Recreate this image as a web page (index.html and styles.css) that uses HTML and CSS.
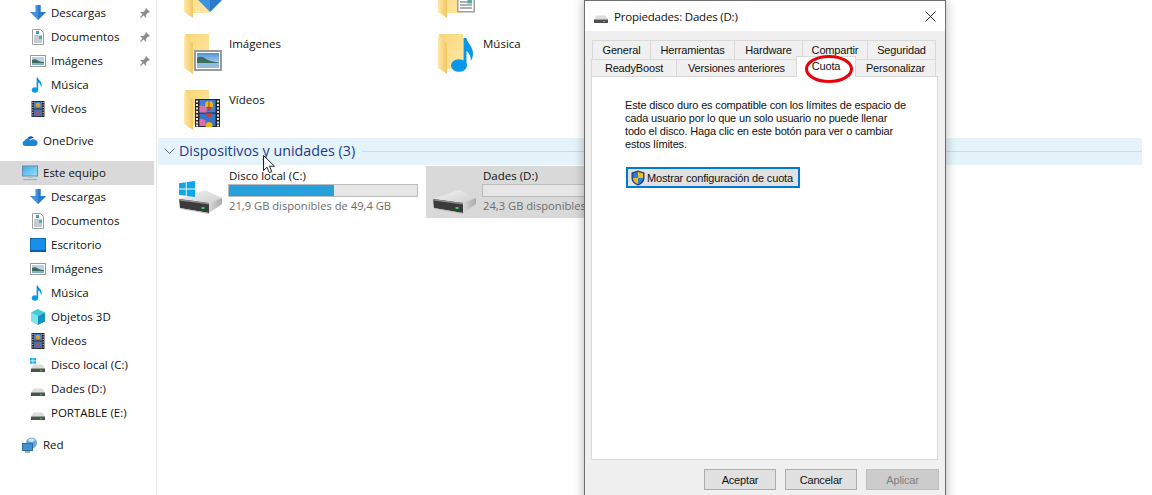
FILE: index.html
```html
<!DOCTYPE html>
<html lang="es">
<head>
<meta charset="utf-8">
<title>Propiedades: Dades (D:)</title>
<link rel="stylesheet" href="styles.css">
</head>
<body>
<svg class="defs" width="0" height="0" aria-hidden="true">
  <defs>
    <linearGradient id="g-back" x1="0" y1="0" x2="1" y2="1"><stop offset="0" stop-color="#f8d677"/><stop offset="1" stop-color="#ffe9a6"/></linearGradient>
    <linearGradient id="g-flap" x1="0" y1="0" x2="1" y2="0"><stop offset="0" stop-color="#ffe9a8"/><stop offset="1" stop-color="#f2c661"/></linearGradient>
    <linearGradient id="g-screen" x1="0" y1="0" x2="1" y2="1"><stop offset="0" stop-color="#3fa9e8"/><stop offset="1" stop-color="#9be0fa"/></linearGradient>
    <linearGradient id="g-sky" x1="0" y1="0" x2="0" y2="1"><stop offset="0" stop-color="#4f93d8"/><stop offset="1" stop-color="#d8ecf2"/></linearGradient>
    <linearGradient id="g-top" x1="0" y1="0" x2="1" y2="1"><stop offset="0" stop-color="#f4f4f4"/><stop offset="1" stop-color="#cfcfcf"/></linearGradient>
    <linearGradient id="g-side" x1="0" y1="0" x2="1" y2="0"><stop offset="0" stop-color="#d8d8d8"/><stop offset="1" stop-color="#a8a8a8"/></linearGradient>

    <symbol id="i-down" viewBox="0 0 16 16"><path d="M5.500 0h5v7H16L8 15 0 7h5.500z" fill="#3f92e0"/><path d="M8 0h2.500v7H16L8 15z" fill="#2b79cb"/></symbol>
    <symbol id="i-doc" viewBox="0 0 16 16"><path d="M2.500.5h8l3 3v12h-11z" fill="#fff" stroke="#a0a0a0"/><path d="M4 7h8M4 9h8M4 11h8M4 13h8" stroke="#8a9aa0"/><path d="M6 2h3v3H6z" fill="#3d9ad6"/><path d="M9 7h3v3H9z" fill="#4fae9c"/></symbol>
    <symbol id="i-pic" viewBox="0 0 16 14"><rect x=".5" y="1.500" width="15" height="11" fill="#fff" stroke="#9a9a9a"/><rect x="2" y="3" width="12" height="8" fill="#b9d4e8"/><path d="M2 6c2-1 4-1 6 .5 2 1.200 4 1.500 6 1.500v1H2z" fill="#3f6b5c"/><rect x="2" y="9" width="12" height="2" fill="#7fb0d0"/></symbol>
    <symbol id="i-pic-lg" viewBox="0 0 28 21"><rect x="1" y="1" width="26" height="19" fill="#fff" stroke="#9a9a9a" stroke-width="2"/><rect x="3" y="3" width="22" height="15" fill="url(#g-sky)"/><path d="M3 8c3-2 6-1.500 9 1 3 2 8 3 13 3.500V14H3z" fill="#3d6d5c"/><rect x="3" y="13" width="22" height="5" fill="#8fbede"/></symbol>
    <symbol id="i-note" viewBox="0 0 16 16"><ellipse cx="5" cy="13" rx="3.200" ry="2.700" fill="#0a97ea"/><path d="M6.600 13V.5h1.300c.3 2.500 3.800 3.500 3.800 7.200 0 1-.3 2-.8 2.800.2-3-1.500-4.600-2.700-5.200V13z" fill="#0a97ea"/></symbol>
    <symbol id="i-note-lg" viewBox="0 0 22 34"><ellipse cx="8" cy="27.500" rx="8" ry="6.300" fill="#0a97ea"/><path d="M12.500 28V0h3c.8 5.500 6.500 8 6.500 15.500 0 3-1 5.500-2.200 7.500.4-5.500-2.800-9.200-4.300-10V28z" fill="#0a97ea"/></symbol>
    <symbol id="i-film" viewBox="0 0 16 16"><rect x="1.500" width="13" height="16" fill="#2e2e2e"/><rect x="4" y="1" width="8" height="6.500" fill="#4c7fce"/><rect x="4" y="8.500" width="8" height="6.500" fill="#3f74c6"/><circle cx="8" cy="4" r="2.200" fill="#e0a020"/><circle cx="8" cy="11.500" r="2" fill="#c6512b"/><path d="M2.300 1.500h1M2.300 4h1M2.300 6.500h1M2.300 9h1M2.300 11.500h1M2.300 14h1M12.700 1.500h1M12.700 4h1M12.700 6.500h1M12.700 9h1M12.700 11.500h1M12.700 14h1" stroke="#ddd" stroke-width="1.200"/></symbol>
    <symbol id="i-film-lg" viewBox="0 0 25 28"><rect width="25" height="28" fill="#262626"/><rect x="4.500" y="1" width="16" height="12.500" fill="#3f7fd4"/><rect x="4.500" y="14.500" width="16" height="12.500" fill="#3a73c8"/><path d="M4.500 7c3-1.500 5 1 7 1v5.500h-7z" fill="#d96fb0"/><circle cx="14" cy="6" r="4" fill="#e8b91c"/><path d="M11 8l3 4 3-4z" fill="#c8322a"/><path d="M14 2v8" stroke="#c8322a"/><path d="M10.500 14.500h7l-3.500 5z" fill="#d33d2c"/><circle cx="14" cy="26.500" r="3.500" fill="#e8b91c"/><path d="M4.500 20c3-1 4 1 6 1v6h-6z" fill="#d96fb0"/><path d="M1 2.500h2M1 6h2M1 9.500h2M1 13h2M1 16.500h2M1 20h2M1 23.500h2M1 26.500h2M22 2.500h2M22 6h2M22 9.500h2M22 13h2M22 16.500h2M22 20h2M22 23.500h2M22 26.500h2" stroke="#e4e4e4" stroke-width="2"/></symbol>
    <symbol id="i-cloud" viewBox="0 0 16 11"><path d="M5 3.500C6 .8 10-.5 12 2.500c-2-.2-3 .5-3.800 1.500-1-.8-2.200-.9-3.200-.5z" fill="#0f5fb5"/><path d="M3.200 10.500C.5 10.500-.6 6.300 2.500 5.300 4 2.500 7.200 3 8.500 5c1.500-2.300 6.200-1.600 7 1.500.5 2-1 4-2.500 4z" fill="#1b87d6"/></symbol>
    <symbol id="i-pc" viewBox="0 0 16 16"><rect x=".5" y="1" width="15" height="10" fill="url(#g-screen)" stroke="#5f8fb0"/><path d="M6 11.500h4V13H6z" fill="#b4bec6"/><path d="M1 14.500h14" stroke="#9fb0be" stroke-width="1.300"/></symbol>
    <symbol id="i-desk" viewBox="0 0 16 14"><rect x=".5" y=".5" width="15" height="12" fill="#1a8fe8" stroke="#0a6cc0"/><path d="M0 12h16v2H0z" fill="#0a5ca8"/></symbol>
    <symbol id="i-cube" viewBox="0 0 16 16"><path d="M8 0 1 3.500v9L8 16z" fill="#7fe3e8"/><path d="M8 0l7 3.500L8 7 1 3.500z" fill="#45cbd8"/><path d="M8 7l7-3.500v9L8 16z" fill="#0e93c4"/></symbol>
    <symbol id="i-drive-s" viewBox="0 0 16 16"><path d="M3.500 7.500h9l2.500 4H1z" fill="#dcdcdc"/><path d="M1 11.500h14V15H1z" fill="#4f4f4f"/><path d="M1 11h14v1H1z" fill="#9c9c9c"/><rect x="10" y="13" width="2" height="1" fill="#30d060"/></symbol>
    <symbol id="i-drive-c" viewBox="0 0 16 16"><path d="M3.500 7.500h9l2.500 4H1z" fill="#dcdcdc"/><path d="M1 11.500h14V15H1z" fill="#4f4f4f"/><path d="M1 11h14v1H1z" fill="#9c9c9c"/><rect x="10" y="13" width="2" height="1" fill="#30d060"/><path d="M0 1h2.700v2.500H0zM3.300 1H6v2.500H3.300zM0 4.200h2.700v2.500H0zM3.300 4.200H6v2.500H3.300z" fill="#15b1ee"/></symbol>
    <symbol id="i-drive-lg" viewBox="0 0 44 24"><path d="M0 9 26 0l17 8-13 5z" fill="url(#g-top)"/><path d="M30 13l13-5v6l-13 9z" fill="url(#g-side)"/><path d="M0 9l30 4v10L1 18z" fill="#3b3b3b"/><path d="M0 9l30 4v1.500L.3 10.500z" fill="#8c8c8c"/><path d="M1 18l29 5v1L2 19z" fill="#bdbdbd"/><rect x="22.500" y="17" width="3" height="2" fill="#2fd35f"/></symbol>
    <symbol id="i-net" viewBox="0 0 16 16"><circle cx="9.500" cy="6" r="5.500" fill="#6fa7d4"/><path d="M6 3c2-2 5-2 7 0-1 2-5 3-7 0z" fill="#cfe6f5"/><rect x=".5" y="6.500" width="10" height="7" fill="#3c93d0" stroke="#2c6d9e"/><path d="M3 15h5" stroke="#7a8a98" stroke-width="1.400"/></symbol>
    <symbol id="i-pin" viewBox="0 0 10 10"><path d="M6 0l4 4-1 .8-.8-.3L6 6.700 6.300 9l-.8.6-2-2L.8 10 0 9.200l2.400-2.700-2-2L1 3.700l2.300.3 2.200-2.200-.3-.8z" fill="#8e8e8e"/></symbol>
    <symbol id="i-folder" viewBox="0 0 26 40"><path d="M1 0h24v35H8z" fill="url(#g-back)"/><path d="M0 2l9 7v31l-9-6z" fill="url(#g-flap)"/></symbol>
  </defs>
</svg>

<div class="app">
  <nav class="sidebar">
    <ul class="tree">
      <li class="node sub"><svg class="ic"><use href="#i-down"/></svg><span class="label">Descargas</span><svg class="pin"><use href="#i-pin"/></svg></li>
      <li class="node sub"><svg class="ic"><use href="#i-doc"/></svg><span class="label">Documentos</span><svg class="pin"><use href="#i-pin"/></svg></li>
      <li class="node sub"><svg class="ic"><use href="#i-pic"/></svg><span class="label">Imágenes</span><svg class="pin"><use href="#i-pin"/></svg></li>
      <li class="node sub"><svg class="ic"><use href="#i-note"/></svg><span class="label">Música</span></li>
      <li class="node sub"><svg class="ic"><use href="#i-film"/></svg><span class="label">Vídeos</span></li>
      <li class="node top gap"><svg class="ic"><use href="#i-cloud"/></svg><span class="label">OneDrive</span></li>
      <li class="node top gap active"><svg class="ic"><use href="#i-pc"/></svg><span class="label">Este equipo</span></li>
      <li class="node sub"><svg class="ic"><use href="#i-down"/></svg><span class="label">Descargas</span></li>
      <li class="node sub"><svg class="ic"><use href="#i-doc"/></svg><span class="label">Documentos</span></li>
      <li class="node sub"><svg class="ic"><use href="#i-desk"/></svg><span class="label">Escritorio</span></li>
      <li class="node sub"><svg class="ic"><use href="#i-pic"/></svg><span class="label">Imágenes</span></li>
      <li class="node sub"><svg class="ic"><use href="#i-note"/></svg><span class="label">Música</span></li>
      <li class="node sub"><svg class="ic"><use href="#i-cube"/></svg><span class="label">Objetos 3D</span></li>
      <li class="node sub"><svg class="ic"><use href="#i-film"/></svg><span class="label">Vídeos</span></li>
      <li class="node sub"><svg class="ic"><use href="#i-drive-c"/></svg><span class="label">Disco local (C:)</span></li>
      <li class="node sub"><svg class="ic"><use href="#i-drive-s"/></svg><span class="label">Dades (D:)</span></li>
      <li class="node sub"><svg class="ic"><use href="#i-drive-s"/></svg><span class="label">PORTABLE (E:)</span></li>
      <li class="node top gap"><svg class="ic"><use href="#i-net"/></svg><span class="label">Red</span></li>
    </ul>
  </nav>

  <main class="content">
    <div class="folders">
      <div class="folder"><span class="thumb"><svg class="fold"><use href="#i-folder"/></svg><svg class="ov ov-down"><use href="#i-down"/></svg></span><span class="fname"></span></div>
      <div class="folder"><span class="thumb"><svg class="fold"><use href="#i-folder"/></svg><svg class="ov ov-doc"><use href="#i-doc"/></svg></span><span class="fname"></span></div>
      <div class="folder"><span class="thumb"><svg class="fold"><use href="#i-folder"/></svg><svg class="ov ov-pic"><use href="#i-pic-lg"/></svg></span><span class="fname">Imágenes</span></div>
      <div class="folder"><span class="thumb"><svg class="fold"><use href="#i-folder"/></svg><svg class="ov ov-note"><use href="#i-note-lg"/></svg></span><span class="fname">Música</span></div>
      <div class="folder"><span class="thumb"><svg class="fold"><use href="#i-folder"/></svg><svg class="ov ov-film"><use href="#i-film-lg"/></svg></span><span class="fname">Vídeos</span></div>
    </div>

    <header class="group">
      <svg class="chev" viewBox="0 0 11 7"><path d="M.5.5l5 5 5-5" fill="none" stroke="#6a7a8a"/></svg>
      <span class="group-title">Dispositivos y unidades (3)</span>
      <span class="group-line"></span>
    </header>

    <div class="drives">
      <div class="drive">
        <span class="drive-ic"><svg class="disk"><use href="#i-drive-lg"/></svg><svg class="win" viewBox="0 0 16 16"><path d="M0 2.200 6.800 1.200V7.500H0zM7.700 1.100 16 0V7.500H7.700zM0 8.400H6.800V14.800L0 13.800zM7.700 8.400H16V16L7.700 14.900z" fill="#0ea5e9"/></svg></span>
        <div class="drive-info">
          <div class="drive-name">Disco local (C:)</div>
          <div class="bar"><div class="bar-fill fill-c"></div></div>
          <div class="drive-free">21,9 GB disponibles de 49,4 GB</div>
        </div>
      </div>
      <div class="drive selected">
        <span class="drive-ic"><svg class="disk"><use href="#i-drive-lg"/></svg></span>
        <div class="drive-info">
          <div class="drive-name">Dades (D:)</div>
          <div class="bar"></div>
          <div class="drive-free">24,3 GB disponibles de 49,4 GB</div>
        </div>
      </div>
    </div>
  </main>
</div>

<svg class="cursor" viewBox="0 0 13 20"><path d="M.5.500v15l3.500-3.300 2.300 5.500 2.500-1-2.300-5.500h5z" fill="#fff" stroke="#222"/></svg>

<section class="dialog">
  <div class="titlebar">
    <svg class="title-ic"><use href="#i-drive-s"/></svg>
    <span class="title-text">Propiedades: Dades (D:)</span>
    <svg class="close" viewBox="0 0 11 11"><path d="M.5.500l10 10M10.500.500l-10 10" stroke="#222" fill="none"/></svg>
  </div>
  <div class="dialog-body">
    <div class="tabs">
      <div class="tab-row row-back">
        <span class="tab t-general">General</span>
        <span class="tab t-tools">Herramientas</span>
        <span class="tab t-hw">Hardware</span>
        <span class="tab t-share">Compartir</span>
        <span class="tab t-sec">Seguridad</span>
      </div>
      <div class="tab-row row-front">
        <span class="tab t-boost">ReadyBoost</span>
        <span class="tab t-prev">Versiones anteriores</span>
        <span class="tab t-quota on">Cuota</span>
        <span class="tab t-custom">Personalizar</span>
      </div>
    </div>
    <div class="panel">
      <p class="panel-text">Este disco duro es compatible con los límites de espacio de<br>cada usuario por lo que un solo usuario no puede llenar<br>todo el disco. Haga clic en este botón para ver o cambiar<br>estos límites.</p>
      <button class="quota-btn" type="button">
        <svg class="shield" viewBox="0 0 16 16"><path d="M8 .5 14.500 2.500V8c0 3.800-3 6.300-6.500 7.500C4.500 14.300 1.500 11.800 1.500 8V2.500z" fill="#1d3f7a"/><path d="M8 1.800V8H2.800V3.400z" fill="#2c7fd6"/><path d="M8 1.800 13.200 3.400V8H8z" fill="#f2b81c"/><path d="M2.800 8H8v6.200C5 13 2.800 11 2.800 8z" fill="#f2b81c"/><path d="M8 8h5.200c0 3-2.200 5-5.200 6.200z" fill="#2c7fd6"/></svg>
        <span>Mostrar configuración de cuota</span>
      </button>
    </div>
    <div class="actions">
      <button class="act" type="button">Aceptar</button>
      <button class="act" type="button">Cancelar</button>
      <button class="act off" type="button">Aplicar</button>
    </div>
  </div>
  <svg class="ring" viewBox="0 0 50 30"><ellipse cx="25" cy="15" rx="22.500" ry="12.500" fill="none" stroke="#e8000b" stroke-width="3"/></svg>
</section>
</body>
</html>
```
FILE: styles.css
```css
* { box-sizing: border-box; }
html, body { margin: 0; height: 100%; }
body {
  width: 1152px;
  height: 495px;
  overflow: hidden;
  position: relative;
  background: #fff;
  color: #111;
  font-family: "Open Sans", "Noto Sans", sans-serif;
  font-size: 11.500px;
}
.defs { position: absolute; }

.app { display: flex; height: 495px; overflow: hidden; }

/* Sidebar */
.sidebar { width: 157px; flex: none; border-right: 1px solid #e6e6e6; padding-top: 1px; }
.tree { list-style: none; margin: 0; padding: 0; }
.node { display: flex; align-items: center; height: 24px; margin-right: 2px; white-space: nowrap; }
.node.sub { padding-left: 30px; }
.node.top { padding-left: 22px; }
.node.gap { margin-top: 8px; }
.node.active { background: #d9d9d9; }
.ic { width: 16px; height: 16px; flex: none; margin-right: 5px; }
.label { flex: 1; padding-bottom: 2px; }
.pin { width: 10px; height: 10px; flex: none; margin-right: 4px; }

/* Content */
.content { flex: 1; min-width: 0; }
.folders {
  display: grid;
  grid-template-columns: 254px 254px;
  grid-template-rows: 56px 56px 48px;
  margin: -22px 0 0 23px;
}
.folder { display: flex; gap: 1px; }
.thumb { position: relative; width: 48px; height: 48px; flex: none; }
.fold { position: absolute; left: 4px; top: 0; width: 26px; height: 40px; }
.ov { position: absolute; }
.ov-down { left: 17px; top: 9px; width: 26px; height: 27px; }
.ov-doc { left: 20px; top: 8px; width: 24px; height: 29px; }
.ov-pic { left: 14px; top: 16px; width: 28px; height: 21px; }
.ov-note { left: 17px; top: 4px; width: 22px; height: 34px; }
.ov-film { left: 15px; top: 9px; width: 25px; height: 28px; }
.fname { line-height: 16px; padding-top: 2px; }

.group {
  display: flex;
  align-items: center;
  height: 27px;
  margin: 0 10px 0 1px;
  padding-left: 6px;
  background: #e5f3fb;
}
.chev { width: 11px; height: 7px; flex: none; margin-right: 4px; }
.group-title { font-size: 14.300px; color: #1f3a8a; white-space: nowrap; padding-bottom: 2px; }
.group-line { flex: 1; height: 1px; margin-left: 7px; background: #c9d9e6; }

.drives { display: flex; margin: 1px 0 0 15px; }
.drive { width: 254px; height: 52px; display: flex; flex: none; }
.drive.selected { background: #d9d9d9; }
.drive-ic { position: relative; width: 57px; flex: none; }
.disk { position: absolute; left: 7px; top: 24px; width: 44px; height: 24px; }
.win { position: absolute; left: 7px; top: 15px; width: 16px; height: 16px; }
.drive-info { width: 190px; padding-top: 2px; margin-left: -1px; }
.drive-name { line-height: 16px; margin-left: 1px; }
.bar { height: 13px; border: 1px solid #bcbcbc; background: #e6e6e6; }
.bar-fill { height: 100%; background: #26a0da; }
.fill-c { width: 56%; }
.drive-free { font-size: 11.200px; line-height: 16px; color: #6d6d6d; margin: 1px 0 0 1px; white-space: nowrap; }

.cursor { position: absolute; left: 263px; top: 155px; width: 13px; height: 20px; }

/* Dialog */
.dialog {
  position: absolute;
  left: 584px;
  top: 0;
  width: 362px;
  height: 510px;
  background: #f0f0f0;
  border: 1px solid #6e6e6e;
  box-shadow: 0 0 10px rgba(0, 0, 0, .3);
  font-family: "Liberation Sans", Arial, sans-serif;
  font-size: 11px;
  letter-spacing: -.17px;
  color: #111;
}
.titlebar { display: flex; align-items: center; height: 30px; background: #fff; padding: 0 9px; }
.title-ic { width: 16px; height: 16px; flex: none; margin: 0 5px 0 -1px; }
.title-text { flex: 1; font-family: "Open Sans", sans-serif; font-size: 11.500px; letter-spacing: -.2px; }
.close { width: 11px; height: 11px; flex: none; }
.dialog-body { padding: 9px 7px 0 6px; }
.tabs { display: flex; flex-direction: column; }
.tab-row { display: flex; align-items: flex-end; }
.row-back { height: 19px; margin-left: 2px; }
.row-front { height: 17px; margin-left: 1px; }
.tab {
  display: flex;
  align-items: center;
  justify-content: center;
  flex: none;
  height: 100%;
  background: #f0f0f0;
  border: 1px solid #d9d9d9;
  border-bottom: 0;
  margin-left: -1px;
  white-space: nowrap;
}
.tab.on {
  position: relative;
  z-index: 1;
  height: 21px;
  background: #fff;
  padding-bottom: 3px;
  margin-bottom: -1px;
}
.t-general { width: 59px; }
.t-tools { width: 85px; }
.t-hw { width: 69px; }
.t-share { width: 66px; }
.t-sec { width: 69px; }
.t-boost { width: 86px; }
.t-prev { width: 121px; }
.t-quota { width: 60px; }
.t-custom { width: 81px; }
.panel {
  height: 384px;
  background: #fff;
  border: 1px solid #d9d9d9;
  padding: 22px 0 0 33px;
}
.panel-text { margin: 0; line-height: 13px; white-space: nowrap; }
.quota-btn {
  display: flex;
  align-items: center;
  gap: 1px;
  width: 174px;
  height: 21px;
  margin: 16px 0 0 1px;
  padding: 0 0 0 2px;
  background: #e1e1e1;
  border: 2px solid #0078d7;
  font: inherit;
  letter-spacing: inherit;
  color: inherit;
  white-space: nowrap;
}
.shield { width: 16px; height: 16px; flex: none; }
.actions { display: flex; justify-content: flex-end; gap: 9px; margin-top: 9px; margin-right: -1px; }
.act {
  width: 72px;
  height: 21px;
  padding: 0;
  background: #e1e1e1;
  border: 1px solid #adadad;
  font: inherit;
  letter-spacing: inherit;
  color: #111;
}
.act.off { width: 73px; background: #ccc; border-color: #bfbfbf; color: #7f7f7f; }
.ring { position: absolute; left: 219px; top: 53px; width: 50px; height: 30px; z-index: 2; }
```
